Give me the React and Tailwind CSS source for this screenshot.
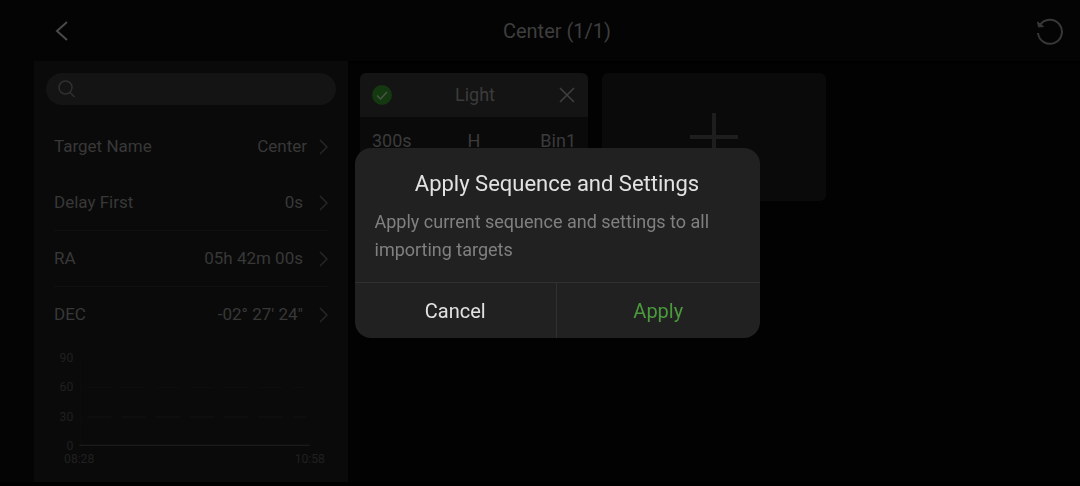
import { useState } from "react";

const settings = [
  { label: "Target Name", value: "Center", gap: "gap-3", line: "border-transparent" },
  { label: "Delay First", value: "0s", gap: "gap-4", line: "border-[#101010]" },
  { label: "RA", value: "05h 42m 00s", gap: "gap-4", line: "border-[#101010]" },
  { label: "DEC", value: "-02° 27' 24\"", gap: "gap-4", line: "border-transparent" },
];

function Chevron() {
  return (
    <svg width="9" height="16" viewBox="0 0 9 16" fill="none" stroke="#262626" strokeWidth="1.5">
      <path d="M1 1l7 7-7 7" />
    </svg>
  );
}

function Header() {
  return (
    <header className="flex h-[61px] items-center justify-between bg-[#040404] pl-5 pr-4">
      <button type="button" aria-label="Back" className="flex w-6 justify-start">
        <svg width="15" height="22" viewBox="0 0 15 22" fill="none" stroke="#4a4a4a" strokeWidth="2">
          <path d="M13 2L3 11l10 9" />
        </svg>
      </button>
      <h1 className="text-xl text-[#3e3e3e]">Center (1/1)</h1>
      <button type="button" aria-label="Reset" className="flex">
        <svg width="28" height="28" viewBox="0 0 28 28" fill="none" stroke="#383838" strokeWidth="2">
          <path d="M2 16A12 12 0 1 0 4 8" />
          <path d="M1.5 5l1 5 5-0.5z" fill="#383838" strokeWidth="1" />
        </svg>
      </button>
    </header>
  );
}

function AltitudeChart() {
  return (
    <svg
      className="-mt-1 block w-full"
      viewBox="0 0 288 136"
      fontFamily="Roboto, sans-serif"
      fontSize="12"
      fill="#202020"
    >
      <g textAnchor="end">
        <text x="27" y="23">90</text>
        <text x="27" y="52">60</text>
        <text x="27" y="81">30</text>
        <text x="27" y="110">0</text>
      </g>
      <path d="M34 19v86" stroke="#0e0e0e" />
      <path d="M41 48.5h217" stroke="#0f0f0f" strokeDasharray="24 10" />
      <path d="M41 77.5h217" stroke="#131313" strokeDasharray="24 10" />
      <path d="M33 105.5h229" stroke="#202020" />
      <text x="18" y="123">08:28</text>
      <text x="247" y="123">10:58</text>
    </svg>
  );
}

function Sidebar() {
  return (
    <aside className="w-[314px] shrink-0 bg-[#0a0a0a] px-3 pt-3">
      <label className="flex h-8 items-center rounded-full bg-[#141414] px-3">
        <svg width="18" height="18" viewBox="0 0 18 18" fill="none" stroke="#303030" strokeWidth="1.5">
          <circle cx="7.5" cy="7.5" r="6.5" />
          <path d="M12 12.5l4.5 4.5" />
        </svg>
        <input
          type="text"
          aria-label="Search"
          className="ml-2 min-w-0 flex-1 bg-transparent text-base text-[#424242] outline-none"
        />
      </label>

      <div className="mt-3.5 px-2">
        {settings.map((item) => (
          <button
            key={item.label}
            type="button"
            className={`flex h-14 w-full items-center justify-between border-b text-[17px] text-[#383838] ${item.line}`}
          >
            <span>{item.label}</span>
            <span className={`flex items-center ${item.gap}`}>
              {item.value}
              <Chevron />
            </span>
          </button>
        ))}
      </div>

      <AltitudeChart />
    </aside>
  );
}

function SequenceCard() {
  return (
    <section className="h-32 w-[228px] overflow-hidden rounded-md bg-[#0a0a0a] text-lg text-[#3b3b3b]">
      <div className="flex h-11 items-center justify-between bg-[#141414] px-3">
        <svg width="20" height="20" viewBox="0 0 20 20" fill="none">
          <circle cx="10" cy="10" r="10" fill="#14380f" />
          <path d="M5 10.5l3.5 3.5L15 7" stroke="#4a5548" strokeWidth="1.5" />
        </svg>
        <h2>Light</h2>
        <button type="button" aria-label="Remove" className="flex">
          <svg width="18" height="18" viewBox="0 0 18 18" fill="none" stroke="#404040" strokeWidth="1.5">
            <path d="M2 2l14 14M16 2L2 16" />
          </svg>
        </button>
      </div>
      <div className="grid grid-cols-3 px-3 pt-2.5">
        <span>300s</span>
        <span className="text-center">H</span>
        <span className="text-right">Bin1</span>
      </div>
    </section>
  );
}

function ApplyDialog({ onClose }) {
  return (
    <div className="fixed inset-0 flex items-center justify-center pl-[34px]">
      <div
        role="dialog"
        aria-modal="true"
        aria-labelledby="apply-title"
        className="w-[405px] overflow-hidden rounded-2xl bg-[#212121]"
      >
        <div className="px-5 py-[18px]">
          <h2 id="apply-title" className="text-center text-[22px] leading-9 text-[#e2e2e2]">
            Apply Sequence and Settings
          </h2>
          <p className="mt-1.5 text-lg leading-7 text-[#808080]">
            Apply current sequence and settings to all importing targets
          </p>
        </div>
        <div className="grid h-14 grid-cols-2 border-t border-[#303030] text-xl">
          <button type="button" onClick={onClose} className="border-r border-[#303030] text-[#e2e2e2]">
            Cancel
          </button>
          <button type="button" onClick={onClose} className="text-[#4a9a3c]">
            Apply
          </button>
        </div>
      </div>
    </div>
  );
}

export default function App() {
  const [open, setOpen] = useState(true);

  return (
    <div className="flex min-h-screen flex-col border-b-4 border-black bg-[#040404] pl-[34px] font-[Roboto,sans-serif]">
      <Header />
      <div className="flex flex-1 bg-black">
        <Sidebar />
        <main className="flex flex-1 items-start gap-3.5 border-t-2 border-black bg-[#020202] px-3 pt-2.5">
          <SequenceCard />
          <button
            type="button"
            aria-label="Add sequence"
            className="flex h-32 w-56 items-center justify-center rounded-md bg-[#0a0a0a]"
          >
            <svg width="48" height="48" viewBox="0 0 48 48" fill="none" stroke="#1e1e1e" strokeWidth="4">
              <path d="M24 0v48M0 24h48" />
            </svg>
          </button>
        </main>
      </div>
      {open && <ApplyDialog onClose={() => setOpen(false)} />}
    </div>
  );
}
